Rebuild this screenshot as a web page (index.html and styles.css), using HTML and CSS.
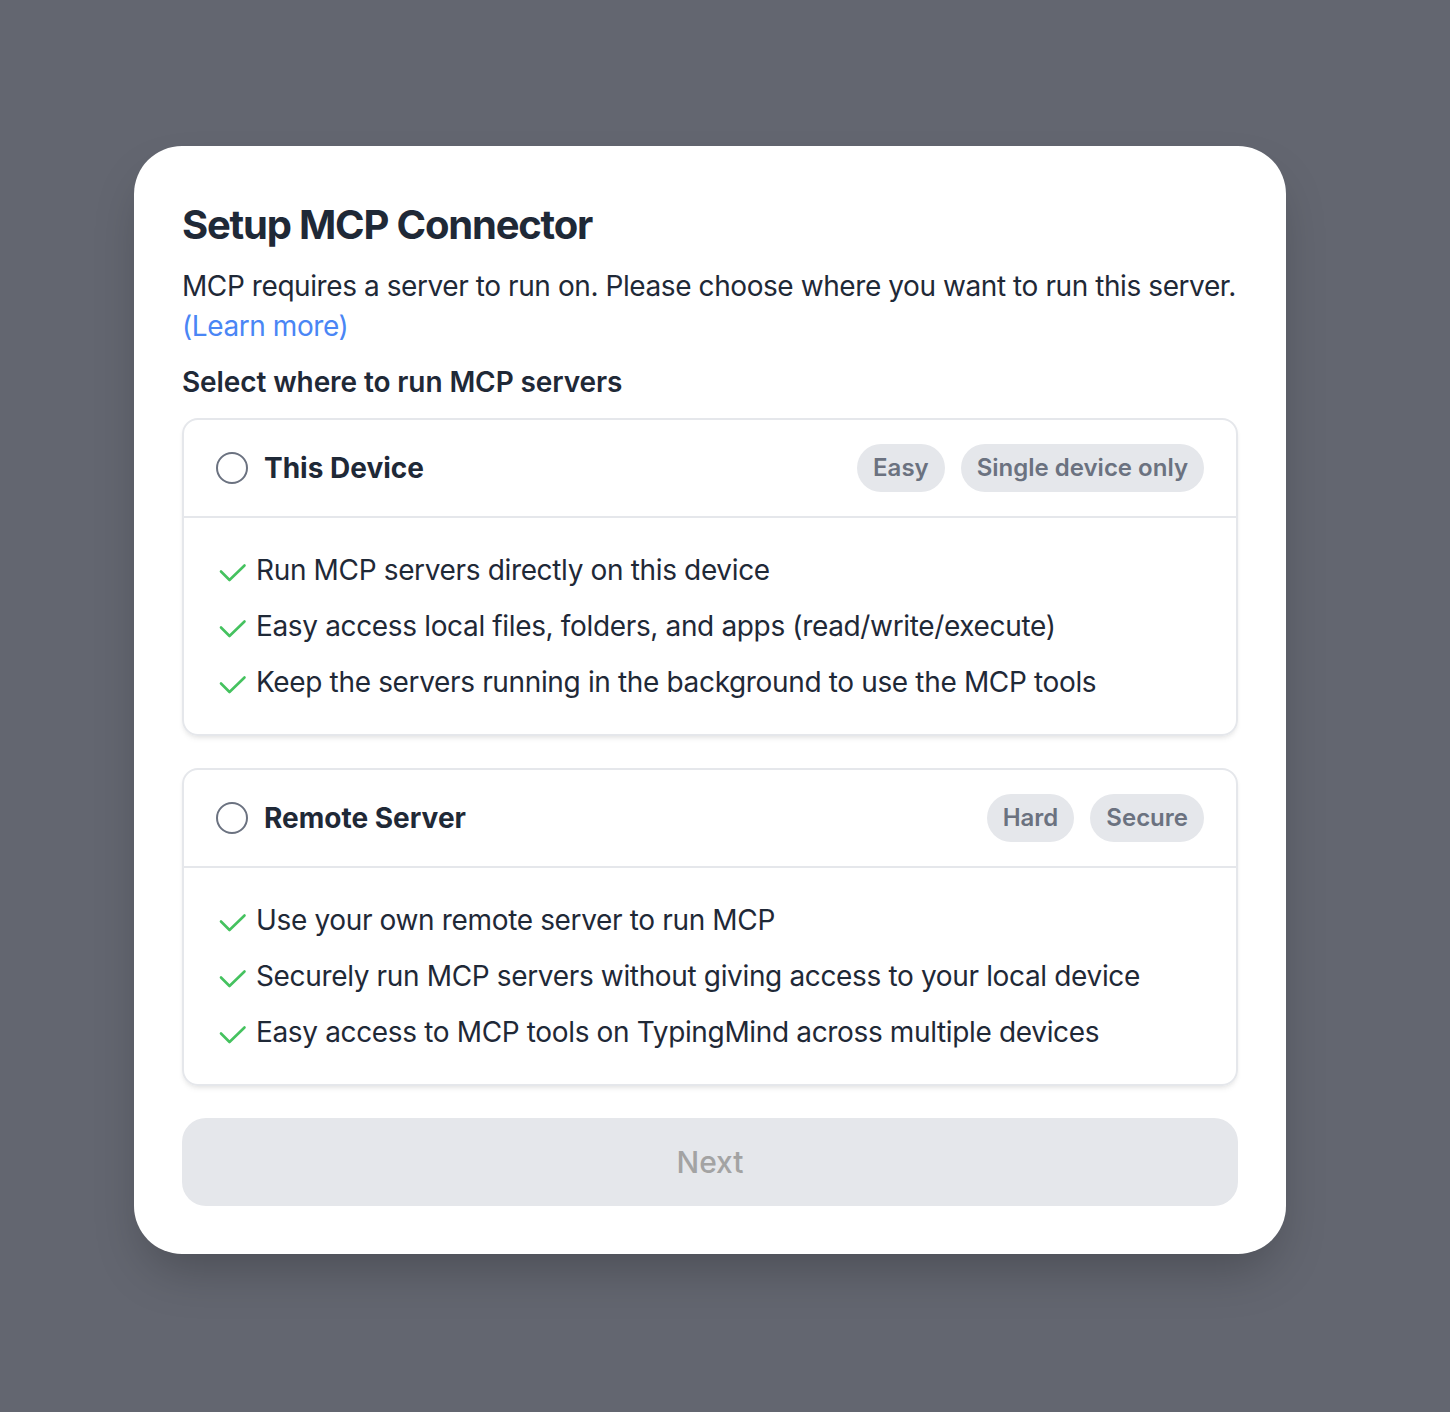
FILE: index.html
```html
<!DOCTYPE html>
<html lang="en">
<head>
<meta charset="utf-8">
<title>Setup MCP Connector</title>
<link rel="stylesheet" href="styles.css">
</head>
<body>
<div class="backdrop">
  <div class="modal">
    <h1 class="title">Setup MCP Connector</h1>
    <p class="desc">MCP requires a server to run on. Please choose where you want to run this server. <a class="link" href="#">(Learn more)</a></p>
    <h2 class="subtitle">Select where to run MCP servers</h2>

    <div class="option">
      <div class="option-head">
        <span class="radio"></span>
        <span class="option-name">This Device</span>
        <span class="badges">
          <span class="badge">Easy</span>
          <span class="badge">Single device only</span>
        </span>
      </div>
      <ul class="features">
        <li><svg class="check" viewBox="0 0 30 20"><path d="M3 8.5l8.5 8.5L26.5 2.5"/></svg><span>Run MCP servers directly on this device</span></li>
        <li><svg class="check" viewBox="0 0 30 20"><path d="M3 8.5l8.5 8.5L26.5 2.5"/></svg><span>Easy access local files, folders, and apps (read/write/execute)</span></li>
        <li><svg class="check" viewBox="0 0 30 20"><path d="M3 8.5l8.5 8.5L26.5 2.5"/></svg><span>Keep the servers running in the background to use the MCP tools</span></li>
      </ul>
    </div>

    <div class="option">
      <div class="option-head">
        <span class="radio"></span>
        <span class="option-name">Remote Server</span>
        <span class="badges">
          <span class="badge">Hard</span>
          <span class="badge">Secure</span>
        </span>
      </div>
      <ul class="features">
        <li><svg class="check" viewBox="0 0 30 20"><path d="M3 8.5l8.5 8.5L26.5 2.5"/></svg><span>Use your own remote server to run MCP</span></li>
        <li><svg class="check" viewBox="0 0 30 20"><path d="M3 8.5l8.5 8.5L26.5 2.5"/></svg><span>Securely run MCP servers without giving access to your local device</span></li>
        <li><svg class="check" viewBox="0 0 30 20"><path d="M3 8.5l8.5 8.5L26.5 2.5"/></svg><span>Easy access to MCP tools on TypingMind across multiple devices</span></li>
      </ul>
    </div>

    <button class="next" type="button" disabled>Next</button>
  </div>
</div>
</body>
</html>
```

FILE: styles.css
```css
html, body {
  margin: 0;
  padding: 0;
}
body {
  background: #636670;
  font-family: Inter, "Noto Sans", sans-serif;
  color: #1f2937;
  -webkit-font-smoothing: antialiased;
}
.backdrop {
  min-height: 1412px;
  padding: 146px 30px 0 0;
  box-sizing: border-box;
  display: flex;
  justify-content: center;
  align-items: flex-start;
}
.modal {
  width: 1152px;
  box-sizing: border-box;
  background: #fff;
  border-radius: 48px;
  padding: 51px 48px 48px;
  box-shadow: 0 25px 50px -12px rgba(0, 0, 0, 0.25);
}
.title {
  margin: 0;
  font-size: 40px;
  line-height: 56px;
  font-weight: 700;
  letter-spacing: -1.2px;
  color: #1f2937;
}
.desc {
  margin: 13px 0 0;
  font-size: 28px;
  line-height: 40px;
  font-weight: 400;
  letter-spacing: -0.42px;
  color: #1f2937;
}
.link {
  color: #4a86f5;
  text-decoration: none;
}
.subtitle {
  margin: 16px 0 16px;
  font-size: 28px;
  line-height: 40px;
  font-weight: 600;
  letter-spacing: -0.1px;
  color: #1f2937;
}
.option {
  border: 2px solid #e5e7eb;
  border-radius: 16px;
  box-shadow: 0 4px 6px -2px rgba(0, 0, 0, 0.08), 0 2px 4px -1px rgba(0, 0, 0, 0.05);
  margin-bottom: 32px;
}
.option-head {
  display: flex;
  align-items: center;
  padding: 0 32px;
  height: 98px;
  box-sizing: border-box;
  border-bottom: 2px solid #e5e7eb;
}
.radio {
  width: 28px;
  height: 28px;
  border: 2px solid #6b7280;
  border-radius: 50%;
  flex: none;
}
.option-name {
  margin-left: 16px;
  font-size: 28px;
  font-weight: 700;
  color: #1f2937;
}
.badges {
  margin-left: auto;
  display: flex;
  gap: 16px;
}
.badge {
  background: #e5e7eb;
  color: #6b7280;
  font-size: 24px;
  font-weight: 600;
  line-height: 48px;
  padding: 0 16px;
  border-radius: 9999px;
}
.features {
  list-style: none;
  margin: 0;
  padding: 32px 32px;
  display: flex;
  flex-direction: column;
  gap: 16px;
}
.features li {
  display: flex;
  align-items: center;
  font-size: 28px;
  line-height: 40px;
  letter-spacing: -0.35px;
  color: #1f2937;
}
.check {
  width: 30px;
  height: 20px;
  flex: none;
  margin-left: 2px;
  margin-right: 8px;
  margin-top: 6px;
  fill: none;
  stroke: #45c25f;
  stroke-width: 2.6;
  stroke-linecap: round;
  stroke-linejoin: round;
}
.next {
  display: block;
  width: 100%;
  height: 88px;
  margin-top: 32px;
  border: 0;
  border-radius: 24px;
  background: #e5e7eb;
  color: #a3a3a3;
  font-family: Inter, "Noto Sans", sans-serif;
  font-size: 30px;
  font-weight: 500;
}
```
